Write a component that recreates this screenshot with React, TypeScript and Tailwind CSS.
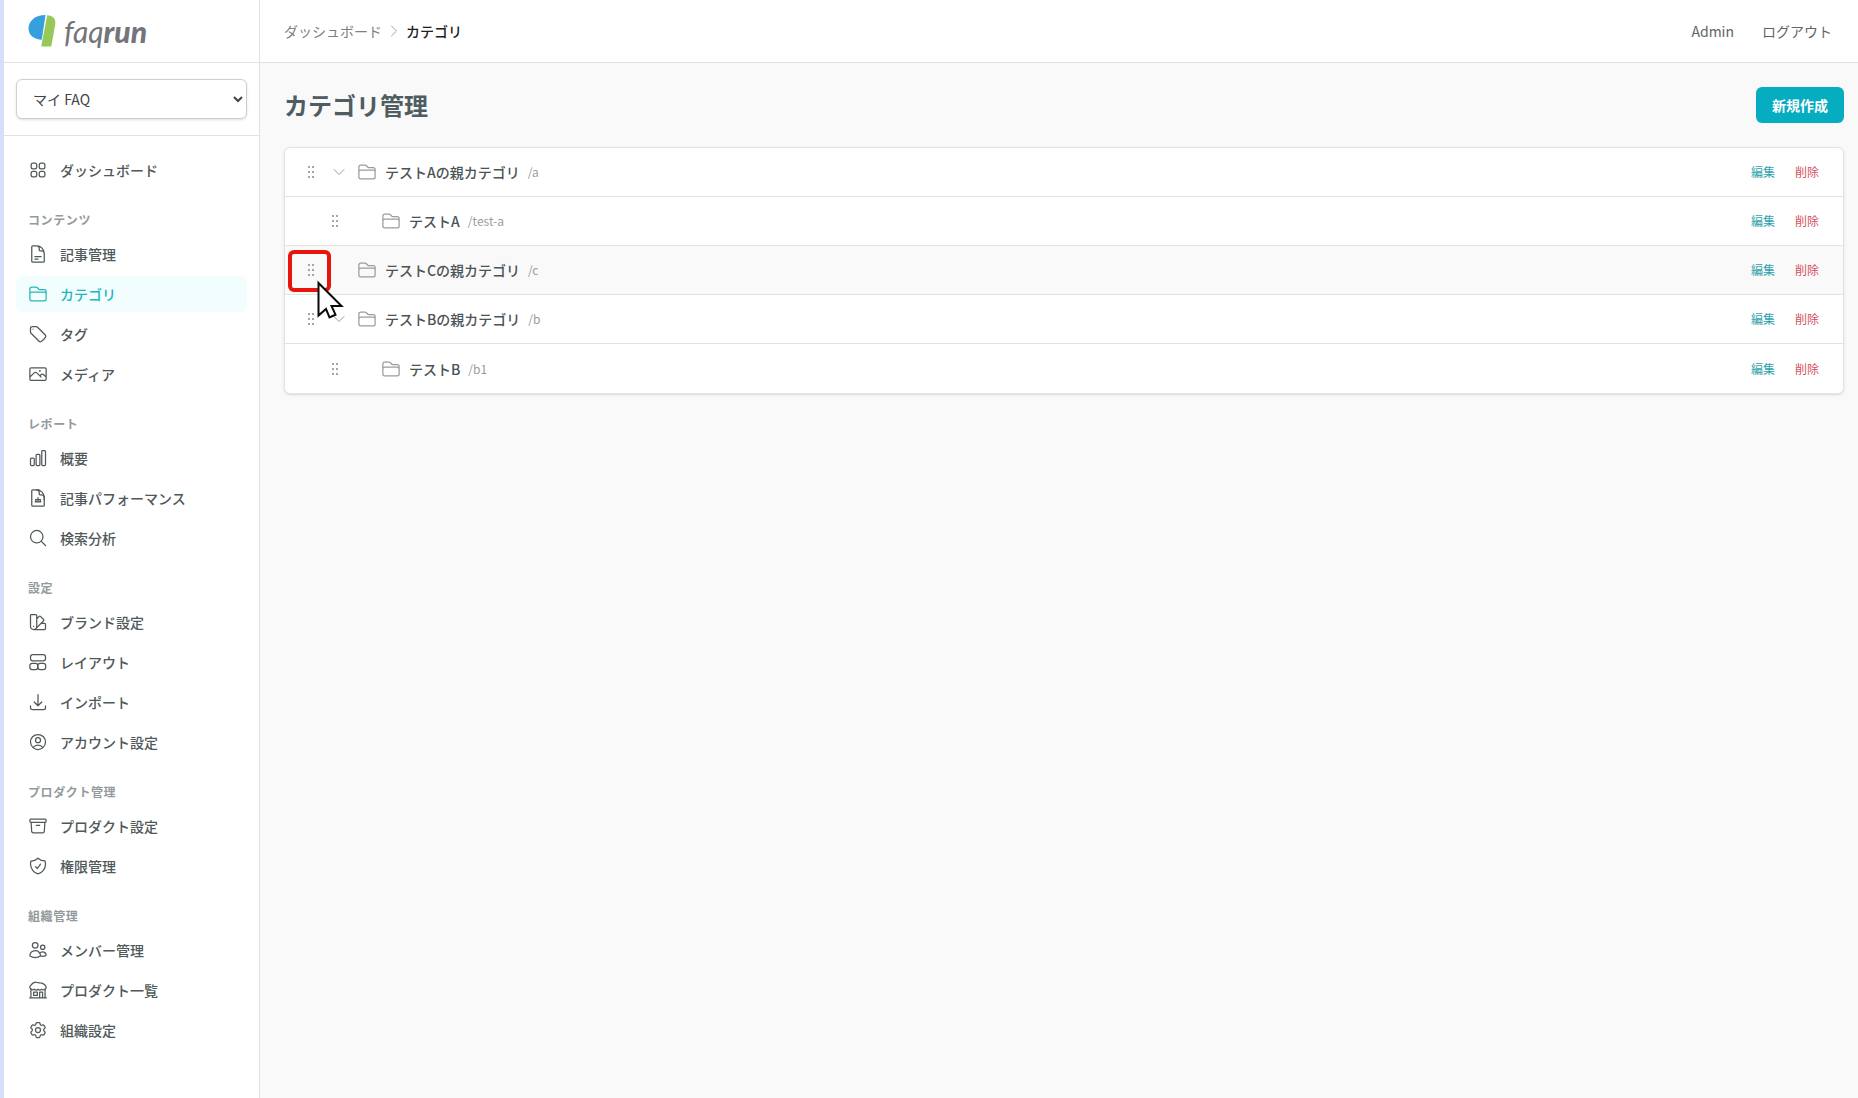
import {
  HiOutlineDocumentText, HiOutlineFolder, HiOutlineTag, HiOutlinePhoto, HiOutlineSquares2X2,
  HiOutlineChartBar, HiOutlineMagnifyingGlass, HiOutlineSwatch,
  HiOutlineArrowDownTray, HiOutlineUserCircle, HiOutlineArchiveBox, HiOutlineShieldCheck,
  HiOutlineUsers, HiOutlineCog6Tooth, HiOutlineChevronDown, HiOutlineChevronRight,
} from "react-icons/hi2";
import type { ComponentType, ReactNode } from "react";

type IconType = ComponentType<{ className?: string }>;
type NavItem = { label: string; icon: IconType; active?: boolean };
type NavGroup = { title?: string; items: NavItem[] };

function LineIcon({ className, children }: { className?: string; children: ReactNode }) {
  return (
    <svg
      viewBox="0 0 24 24"
      fill="none"
      stroke="currentColor"
      strokeWidth={1.5}
      strokeLinecap="round"
      strokeLinejoin="round"
      className={className}
      aria-hidden="true"
    >
      {children}
    </svg>
  );
}

function LayoutIcon({ className }: { className?: string }) {
  return (
    <LineIcon className={className}>
      <rect x="3" y="3" width="18" height="7.5" rx="2.75" />
      <rect x="2.25" y="13.5" width="9.5" height="7.5" rx="2.75" />
      <rect x="11.75" y="13.5" width="9.5" height="7.5" rx="2.75" />
    </LineIcon>
  );
}

function DocumentReportIcon({ className }: { className?: string }) {
  return (
    <LineIcon className={className}>
      <path d="M13.5 2.250H5.625A1.125 1.125 0 0 0 4.500 3.375v17.250c0 .620.500 1.125 1.125 1.125h12.750c.620 0 1.125-.500 1.125-1.125V11.250a9 9 0 0 0-9-9" />
      <path d="M19.500 14.250v-2.625a3.375 3.375 0 0 0-3.375-3.375h-1.500A1.125 1.125 0 0 1 13.500 7.125v-1.500a3.375 3.375 0 0 0-3.375-3.375" />
      <path d="M8.500 16.500h7M12 11.500v5M9.250 14v2.500M14.750 14v2.500M9 14h6" />
    </LineIcon>
  );
}

function StoreIcon({ className }: { className?: string }) {
  return (
    <LineIcon className={className}>
      <path d="M2 21.500h20M3.500 21.500V11M20.500 21.500V11M14 21.500V14.500h3.500v7M6.750 14.500h4.500v4h-4.500z" />
      <path d="M3 10.500a2.500 2.500 0 0 1-.5-3.200C4 6 4.500 4.500 6.500 3.500l2.500-1c2 1.200 6 .500 8 1.200 1.500.800 4 2.800 4.700 4.300a2.500 2.500 0 0 1-1.200 3 2.800 2.800 0 0 1-4 0 2.800 2.800 0 0 1-4.500 0 2.800 2.800 0 0 1-4.500 0 3.200 3.200 0 0 1-4.500-.500Z" />
    </LineIcon>
  );
}

const groups: NavGroup[] = [
  { items: [{ label: "ダッシュボード", icon: HiOutlineSquares2X2 }] },
  {
    title: "コンテンツ",
    items: [
      { label: "記事管理", icon: HiOutlineDocumentText },
      { label: "カテゴリ", icon: HiOutlineFolder, active: true },
      { label: "タグ", icon: HiOutlineTag },
      { label: "メディア", icon: HiOutlinePhoto },
    ],
  },
  {
    title: "レポート",
    items: [
      { label: "概要", icon: HiOutlineChartBar },
      { label: "記事パフォーマンス", icon: DocumentReportIcon },
      { label: "検索分析", icon: HiOutlineMagnifyingGlass },
    ],
  },
  {
    title: "設定",
    items: [
      { label: "ブランド設定", icon: HiOutlineSwatch },
      { label: "レイアウト", icon: LayoutIcon },
      { label: "インポート", icon: HiOutlineArrowDownTray },
      { label: "アカウント設定", icon: HiOutlineUserCircle },
    ],
  },
  {
    title: "プロダクト管理",
    items: [
      { label: "プロダクト設定", icon: HiOutlineArchiveBox },
      { label: "権限管理", icon: HiOutlineShieldCheck },
    ],
  },
  {
    title: "組織管理",
    items: [
      { label: "メンバー管理", icon: HiOutlineUsers },
      { label: "プロダクト一覧", icon: StoreIcon },
      { label: "組織設定", icon: HiOutlineCog6Tooth },
    ],
  },
];

type Category = { name: string; slug: string; child?: boolean; expandable?: boolean; dragging?: boolean };

const categories: Category[] = [
  { name: "テストAの親カテゴリ", slug: "/a", expandable: true },
  { name: "テストA", slug: "/test-a", child: true },
  { name: "テストCの親カテゴリ", slug: "/c", dragging: true },
  { name: "テストBの親カテゴリ", slug: "/b", expandable: true },
  { name: "テストB", slug: "/b1", child: true },
];

function Logo() {
  return (
    <a href="#" className="flex items-center gap-2" aria-label="faqrun">
      <svg viewBox="0 0 28 32" className="h-8 w-7" aria-hidden="true">
        <path d="M17.500 0C7 0 .500 6 .500 13.500C.500 20 6 24.700 13.800 24.700Z" fill="#35a0dc" />
        <path d="M19.200.300C24.800.300 28 4 27.200 9.500L23.300 31.500H13.200Z" fill="#96c957" />
      </svg>
      <span className="font-[Lato] text-[30px] leading-8 text-[#74757c] italic">
        faq<b className="font-black">run</b>
      </span>
    </a>
  );
}

function Sidebar() {
  return (
    <aside className="flex w-64 shrink-0 flex-col border-r border-[#dfe2e2] bg-white">
      <div className="flex h-[63px] shrink-0 items-center border-b border-[#dfe2e2] px-6">
        <Logo />
      </div>
      <div className="border-b border-[#dfe2e2] px-3 py-4">
        <select
          aria-label="FAQ"
          className="h-10 w-full rounded-md border border-[#cfcfcf] bg-white px-3 text-sm text-[#404648] shadow-sm"
        >
          <option>マイ FAQ</option>
        </select>
      </div>
      <nav className="flex flex-col gap-6 px-3 py-4">
        {groups.map((group) => (
          <div key={group.items[0].label}>
            {group.title && (
              <h2 className="px-3 pb-2 text-xs leading-4 font-semibold tracking-wider text-[#949a9c]">{group.title}</h2>
            )}
            <ul className="flex flex-col gap-1">
              {group.items.map(({ label, icon: Icon, active }) => (
                <li key={label}>
                  <a
                    href="#"
                    className={
                      active
                        ? "flex items-center gap-3 rounded-md bg-[#f1fefd] px-3 py-2 text-sm font-medium text-[#26b5bd]"
                        : "flex items-center gap-3 rounded-md px-3 py-2 text-sm font-medium text-[#50585a]"
                    }
                  >
                    <Icon className="size-5 shrink-0" />
                    {label}
                  </a>
                </li>
              ))}
            </ul>
          </div>
        ))}
      </nav>
    </aside>
  );
}

function DragHandle() {
  return (
    <button type="button" aria-label="並べ替え" className="flex size-5 items-center justify-center text-[#a3a6a7]">
      <svg viewBox="0 0 8 14" className="h-3.5 w-2" fill="currentColor" aria-hidden="true">
        {[1, 5].map((x) => [1, 6, 11].map((y) => <rect key={`${x}-${y}`} x={x} y={y} width="2" height="2" />))}
      </svg>
    </button>
  );
}

function DragPointer() {
  return (
    <>
      <span className="pointer-events-none absolute top-1 left-[3px] z-10 h-[42px] w-[43px] rounded-md border-4 border-[#e8150c]" />
      <svg viewBox="0 0 27 39" className="pointer-events-none absolute top-[34px] left-8 z-20 h-[39px] w-[27px]" aria-hidden="true">
        <path d="M1.500 3V35.500L9 29L12.500 37.500L18.500 34.700L14.500 26H24.500Z" fill="#fff" stroke="#0a0a0a" strokeWidth="2" />
      </svg>
    </>
  );
}

function CategoryRow({ category }: { category: Category }) {
  const { name, slug, child, expandable, dragging } = category;
  return (
    <li className={dragging ? "relative flex h-[49px] items-center bg-[#f9f9f9] px-4" : "flex h-[49px] items-center px-4"}>
      <div className={child ? "flex items-center pl-6" : "flex items-center"}>
        <DragHandle />
        <span className="ml-2 flex size-5 items-center justify-center">
          {expandable && (
            <button type="button" aria-label="折りたたむ" className="text-[#9a9d9e]">
              <HiOutlineChevronDown className="size-4" />
            </button>
          )}
        </span>
        <HiOutlineFolder className="ml-2 size-5 text-[#9a9d9e]" />
        <span className="ml-2 text-sm font-medium text-[#4a5356]">{name}</span>
        <span className="ml-2 text-xs text-[#9a9d9e]">{slug}</span>
      </div>
      <div className="ml-auto flex gap-5 pr-2 text-xs">
        <button type="button" className="text-[#2fa3ad]">編集</button>
        <button type="button" className="text-[#d4505c]">削除</button>
      </div>
      {dragging && <DragPointer />}
    </li>
  );
}

export default function App() {
  return (
    <div className="flex min-h-screen border-l-4 border-[#d5dffb] bg-[#f9f9f9] font-['Noto_Sans_CJK_JP',sans-serif]">
      <Sidebar />
      <div className="flex min-w-0 flex-1 flex-col">
        <header className="flex h-[63px] items-center justify-between border-b border-[#dfe2e2] bg-white pr-[26px] pl-6 text-sm">
          <nav aria-label="パンくず" className="flex items-center gap-1">
            <a href="#" className="text-[#7c8082]">ダッシュボード</a>
            <HiOutlineChevronRight className="size-4 text-[#a3a6a7]" />
            <span className="font-medium text-[#1c2122]">カテゴリ</span>
          </nav>
          <div className="flex items-center gap-7 text-[#606668]">
            <span>Admin</span>
            <button type="button">ログアウト</button>
          </div>
        </header>
        <main className="py-6 pr-[14px] pl-6">
          <div className="flex items-center justify-between">
            <h1 className="text-2xl font-bold text-[#4f5c60]">カテゴリ管理</h1>
            <button type="button" className="rounded-md bg-[#06acbf] px-4 py-2 text-sm font-bold text-white">新規作成</button>
          </div>
          <ul className="mt-6 divide-y divide-[#e2e4e4] rounded-md border border-[#e2e4e4] bg-white shadow-sm">
            {categories.map((c) => (
              <CategoryRow key={c.name} category={c} />
            ))}
          </ul>
        </main>
      </div>
    </div>
  );
}
